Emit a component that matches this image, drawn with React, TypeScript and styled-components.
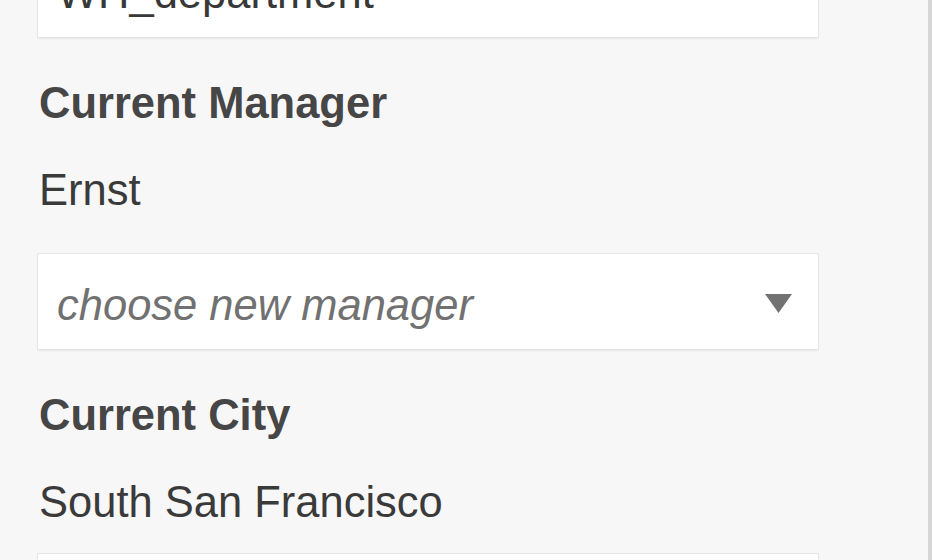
import React from 'react';
import styled, {createGlobalStyle} from 'styled-components';

const GlobalStyle = createGlobalStyle`
  html, body {
    margin: 0;
    padding: 0;
    background-color: #f7f7f7;
    overflow: hidden;
  }

  body {
    font-family: "Liberation Sans", Arial, sans-serif;
  }
`

const Sidebar = styled.div`
  width: 932px;
  height: 560px;
  box-sizing: border-box;
  background-color: #f7f7f7;
  border-right: 4px solid #d6d6d6;
  overflow: hidden;
`

const Form = styled.div`
  display: flex;
  flex-direction: column;
  align-items: flex-start;
  margin-top: -59px;
  padding-left: 37px;
`

const FieldBox = styled.div<{ $gap?: number }>`
  width: 782px;
  height: 97px;
  box-sizing: border-box;
  margin-top: ${props => props.$gap ?? 0}px;
  padding: 26px 26px 19px 19px;
  display: flex;
  align-items: flex-start;
  justify-content: space-between;
  background-color: #fff;
  border: 1px solid #e6e6e6;
  box-shadow: 0 1px 1px rgba(0, 0, 0, 0.05);
  font-size: 43.5px;
  line-height: 50px;
  color: #383838;
`

const Placeholder = styled.span`
  font-style: italic;
  color: #717171;
`

const Caret = styled.svg`
  width: 27px;
  height: 19px;
  margin-top: 14px;
  flex-shrink: 0;
`

const Label = styled.div`
  margin-top: 40px;
  padding-left: 2px;
  font-size: 43.5px;
  line-height: 50px;
  font-weight: bold;
  color: #464646;
`

const Value = styled.div`
  margin-top: 37px;
  padding-left: 2px;
  font-size: 43.5px;
  line-height: 50px;
  color: #3a3a3a;
`

function App() {
    return (
        <>
            <GlobalStyle/>
            <Sidebar>
                <Form>
                    <FieldBox>WH_department</FieldBox>

                    <Label>Current Manager</Label>
                    <Value>Ernst</Value>
                    <FieldBox $gap={38}>
                        <Placeholder>choose new manager</Placeholder>
                        <Caret viewBox="0 0 27 19">
                            <polygon points="0,0 27,0 13.5,19" fill="#727272"/>
                        </Caret>
                    </FieldBox>

                    <Label>Current City</Label>
                    <Value>South San Francisco</Value>
                    <FieldBox $gap={26}/>
                </Form>
            </Sidebar>
        </>
    )
}

export default App;
